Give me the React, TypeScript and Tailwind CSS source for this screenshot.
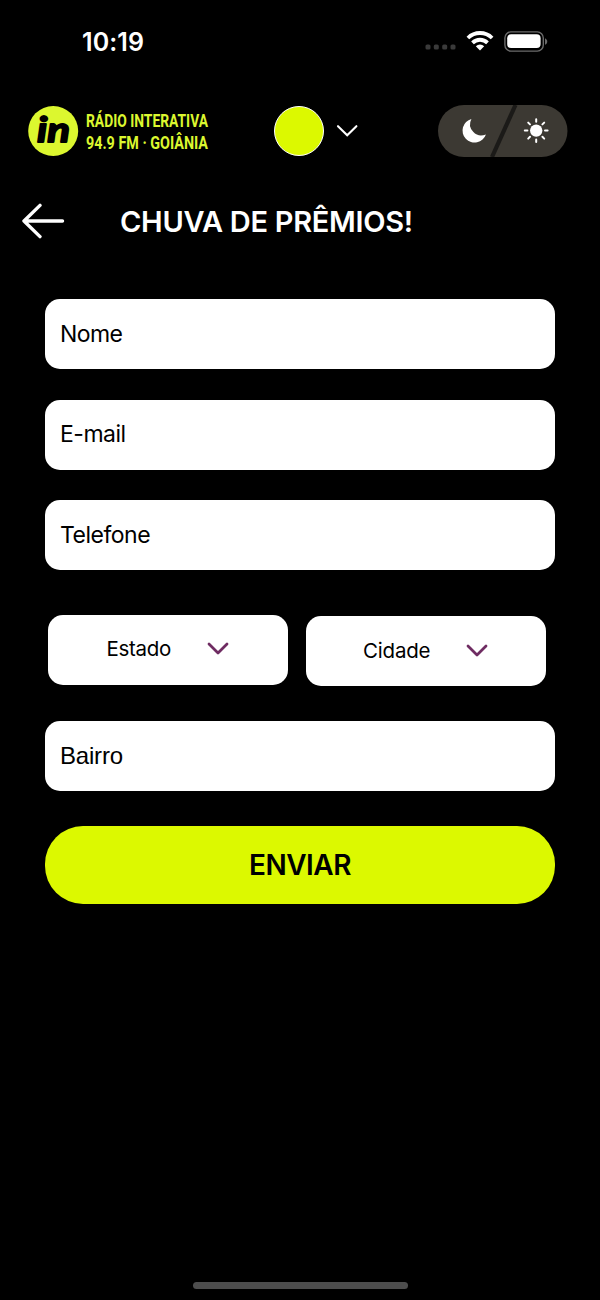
import React from 'react';

const StatusBar = () => {
	return (
		<div className="flex h-[82px] items-center justify-between pl-[82px] pr-[52px]">
			<span className="mt-[2px] font-['Inter',sans-serif] text-[25px] font-semibold leading-none tracking-[0.1px]">
				10:19
			</span>
			<div className="flex items-center">
				<svg width="32" height="6" viewBox="0 0 32 6" fill="#3a3a3a" className="mr-[9px] mt-[12px]">
					<rect x="0.5" y="0.5" width="5" height="5" rx="1.6" />
					<rect x="8.8" y="0.5" width="5" height="5" rx="1.6" />
					<rect x="17.2" y="0.5" width="5" height="5" rx="1.6" />
					<rect x="25.5" y="0.5" width="5" height="5" rx="1.6" />
				</svg>
				<svg width="28" height="22" viewBox="0 0 28 22" fill="none" stroke="#fff" strokeWidth="3.8">
					<path d="M1.9 8a17.2 17.2 0 0 1 24.2 0" />
					<path d="M6.5 12.8a10.7 10.7 0 0 1 15 0" />
					<path d="M14 20.4l-4.2-4.2a6 6 0 0 1 8.4 0z" fill="#fff" stroke="none" />
				</svg>
				<svg width="44" height="21" viewBox="0 0 44 21" className="ml-[10px]">
					<rect x="0.9" y="0.9" width="38.4" height="19.2" rx="6" fill="none" stroke="#6b6b6b" strokeWidth="1.4" />
					<rect x="3.2" y="3.3" width="33.4" height="13.6" rx="4" fill="#fff" />
					<path d="M41 7.2c3 1.4 3 5.2 0 6.6z" fill="#6b6b6b" />
				</svg>
			</div>
		</div>
	);
};

const Logo = () => {
	return (
		<svg width="190" height="52" viewBox="0 0 190 52" fill="#dcf72f" className="overflow-visible">
			<circle cx="25.2" cy="26" r="25" />
			<text
				x="9"
				y="36.5"
				textLength="33"
				lengthAdjust="spacingAndGlyphs"
				fill="#000"
				stroke="#000"
				strokeWidth="1.8"
				strokeLinejoin="round"
				className="font-['Lato',sans-serif] text-[35px] font-bold italic"
			>
				in
			</text>
			<g className="font-['Roboto',sans-serif] text-[18px] font-bold">
				<text x="58" y="22.2" textLength="122" lengthAdjust="spacingAndGlyphs">
					RÁDIO INTERATIVA
				</text>
				<text x="58" y="43.5" textLength="122" lengthAdjust="spacingAndGlyphs">
					94.9 FM · GOIÂNIA
				</text>
			</g>
		</svg>
	);
};

const ThemeSwitch = () => {
	return (
		<button type="button" aria-label="Tema">
			<svg width="130" height="52" viewBox="0 0 130 52">
				<rect width="129.5" height="52" rx="26" fill="#3c3933" />
				<path d="M77.5 0L54 52" stroke="#1b1a18" strokeWidth="4.2" />
				<path d="M33.4 14a12 12 0 1 0 14.5 15.4A11.2 11.2 0 0 1 33.4 14z" fill="#fff" />
				<circle cx="98.2" cy="25.6" r="6.2" fill="#fff" />
				<path
					d="M98.2 14.2v2.6M98.2 34.4v2.6M86.8 25.6h2.6M107 25.6h2.6M90.2 17.6l1.8 1.8M104.4 31.8l1.8 1.8M90.2 33.6l1.8-1.8M104.4 19.4l1.8-1.8"
					stroke="#fff"
					strokeWidth="2"
					strokeLinecap="round"
				/>
			</svg>
		</button>
	);
};

const Header = () => {
	return (
		<header className="mt-[23px] flex h-[52px] items-center pl-[28px]">
			<Logo />
			<div className="ml-[56px] size-[50px] rounded-full border-[1.5px] border-white bg-[#dcf900]" />
			<svg width="22" height="14" viewBox="0 0 22 14" className="ml-[12px] mr-[80px]" fill="none" stroke="#fff" strokeWidth="2.1" strokeLinecap="round">
				<path d="M2 2.2l9.2 9L20.4 2.2" />
			</svg>
			<ThemeSwitch />
		</header>
	);
};

const Field = (props: any) => {
	return (
		<div className="flex h-[70px] items-center rounded-[15px] bg-white pl-[15px] text-black">
			<span className={props.className}>{props.label}</span>
		</div>
	);
};

const Select = (props: any) => {
	return (
		<button type="button" className={`flex h-[70px] w-[240px] items-center rounded-[15px] bg-white text-black ${props.className}`}>
			<span className={props.labelClass}>{props.label}</span>
			<svg width="22" height="14" viewBox="0 0 22 14" fill="none" stroke="#6f2c62" strokeWidth="2.8" strokeLinecap="round" strokeLinejoin="round" className={props.iconClass}>
				<path d="M2 2l9 9 9-9" />
			</svg>
		</button>
	);
};

const App = () => {
	return (
		<div className="flex h-[1300px] w-[600px] flex-col bg-black font-['Inter',sans-serif] text-white">
			<StatusBar />
			<Header />
			<div className="mt-[39px] flex h-[50px] items-center pl-[22px]">
				<svg width="43" height="36" viewBox="0 0 43 36" fill="none" stroke="#fff" strokeWidth="3.4" strokeLinecap="round" strokeLinejoin="round">
					<path d="M40.5 18H2M18 2.4L2 18l16 15.6" />
				</svg>
				<h1 className="ml-[55px] whitespace-nowrap text-[29px] font-semibold leading-none tracking-[-0.3px]">
					CHUVA DE PRÊMIOS!
				</h1>
			</div>
			<form className="mt-[53px] flex flex-col px-[45px]">
				<div className="flex flex-col gap-[30.5px]">
					<Field label="Nome" className="text-[23px] tracking-[-0.6px]" />
					<Field label="E-mail" className="text-[23px] tracking-[-0.5px]" />
					<Field label="Telefone" className="text-[23px] tracking-[-0.5px]" />
				</div>
				<div className="mb-[35px] mt-[45px] flex gap-[18px] pl-[2.5px]">
					<Select label="Estado" className="pl-[59px]" labelClass="mb-[1px] w-[100.5px] text-left text-[20.5px] tracking-[-0.3px]" iconClass="mb-[3px]" />
					<Select label="Cidade" className="mt-[0.5px] pl-[57.5px]" labelClass="mt-[2px] w-[102.5px] text-left text-[20.5px] tracking-[-0.2px]" iconClass="mt-[1px]" />
				</div>
				<Field label="Bairro" className="font-['Liberation_Sans',sans-serif] text-[24px] tracking-[-0.2px]" />
				<button type="button" className="mt-[35px] h-[78px] rounded-[38px] bg-[#dcf900] text-[28px] font-semibold tracking-[-0.5px] text-black">
					ENVIAR
				</button>
			</form>
			<div className="mb-[11px] mt-auto h-[7px] w-[215px] self-center rounded-full bg-[#4d4d4d]" />
		</div>
	);
};

export default App;
